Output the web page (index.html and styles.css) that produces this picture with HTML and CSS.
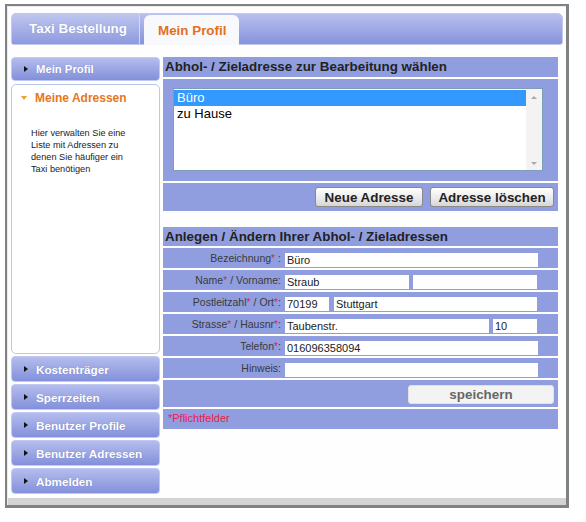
FILE: index.html
```html
<!DOCTYPE html>
<html lang="de">
<head>
<meta charset="utf-8">
<title>Mein Profil</title>
<link rel="stylesheet" href="styles.css">
</head>
<body>
<div class="frame">
  <div class="inner">
    <div class="tabbar">
      <div class="tab">Taxi Bestellung</div>
      <div class="tab active">Mein Profil</div>
    </div>
    <div class="main">
      <div class="sidebar">
        <div class="nav first"><span class="arrow"></span>Mein Profil</div>
        <div class="panel">
          <div class="panel-head"><span class="down"></span>Meine Adressen</div>
          <p class="desc">Hier verwalten Sie eine<br>Liste mit Adressen zu<br>denen Sie häufiger ein<br>Taxi benötigen</p>
        </div>
        <div class="nav"><span class="arrow"></span>Kostenträger</div>
        <div class="nav"><span class="arrow"></span>Sperrzeiten</div>
        <div class="nav"><span class="arrow"></span>Benutzer Profile</div>
        <div class="nav"><span class="arrow"></span>Benutzer Adressen</div>
        <div class="nav"><span class="arrow"></span>Abmelden</div>
      </div>
      <div class="content">
        <div class="sec-head">Abhol- / Zieladresse zur Bearbeitung wählen</div>
        <div class="list-area">
          <div class="listbox">
            <div class="items">
              <div class="item sel">Büro</div>
              <div class="item">zu Hause</div>
            </div>
            <div class="scroll"><span class="up"></span><span class="dn"></span></div>
          </div>
        </div>
        <div class="btn-row">
          <button class="btn">Neue Adresse</button>
          <button class="btn">Adresse löschen</button>
        </div>
        <div class="sec-head second">Anlegen / Ändern Ihrer Abhol- / Zieladressen</div>
        <div class="frow"><div class="lbl">Bezeichnung<span class="req">*</span> :</div><div class="fields"><input class="in w253" value="Büro"></div></div>
        <div class="frow"><div class="lbl">Name<span class="req">*</span> / Vorname:</div><div class="fields"><input class="in w124" value="Straub"><input class="in w124" value=""></div></div>
        <div class="frow"><div class="lbl">Postleitzahl<span class="req">*</span> / Ort<span class="req">*</span>:</div><div class="fields gap5"><input class="in w44" value="70199"><input class="in w203" value="Stuttgart"></div></div>
        <div class="frow"><div class="lbl">Strasse<span class="req">*</span> / Hausnr<span class="req">*</span>:</div><div class="fields"><input class="in w204" value="Taubenstr."><input class="in w44" value="10"></div></div>
        <div class="frow"><div class="lbl">Telefon<span class="req">*</span>:</div><div class="fields"><input class="in w253" value="016096358094"></div></div>
        <div class="frow"><div class="lbl">Hinweis:</div><div class="fields"><input class="in w253" value=""></div></div>
        <div class="save-row"><button class="save">speichern</button></div>
        <div class="req-row">*Pflichtfelder</div>
      </div>
    </div>
    <div class="footer"></div>
  </div>
</div>
</body>
</html>
```

FILE: styles.css
```css
* { box-sizing: border-box; }
html, body { margin: 0; padding: 0; background: #ffffff; }
body { font-family: Arial, "Liberation Sans", sans-serif; color: #222; }

.frame {
  margin: 4px 0 0 5px;
  width: 564px;
  height: 504px;
  border-style: solid;
  border-color: #7e8282;
  border-width: 2px 3px 3px 2px;
  background: #fdfdfd;
}
.inner {
  height: 100%;
  display: flex;
  flex-direction: column;
  border-left: 1px solid #ececec;
  border-top: 1px solid #ececec;
}

.tabbar {
  margin: 6px 3px 0 3px;
  height: 32px;
  display: flex;
  align-items: flex-end;
  gap: 4px;
  border: 1px solid #c3c9ee;
  border-radius: 5px 5px 3px 3px;
  background: linear-gradient(#b8c0ee, #8693dc);
}
.tab {
  height: 31px;
  font-size: 13.4px;
  font-weight: bold;
  display: flex;
  align-items: center;
}
.tab:first-child {
  width: 128px;
  padding-left: 17px;
  color: #fff;
  border-right: 1px solid #d3d8f4;
  border-radius: 4px 4px 0 0;
  background: linear-gradient(#c0c7ef, #8e9ae0);
  text-shadow: 0 0 1px #7b86c6;
}
.tab.active {
  width: 95px;
  height: 30px;
  padding-left: 14px;
  color: #e3701e;
  background: #f8f9fd;
  border-radius: 6px 6px 0 0;
  margin-bottom: -1px;
}

.main {
  flex: 1;
  display: flex;
  gap: 3px;
  padding: 12px 0 0 3px;
  background: #fefefe;
}

.sidebar { width: 149px; display: flex; flex-direction: column; }
.nav {
  height: 26px;
  margin-bottom: 2px;
  display: flex;
  align-items: center;
  padding-left: 12px;
  font-size: 11.7px;
  font-weight: bold;
  color: #fff;
  border: 1px solid #c2c9f0;
  border-radius: 4px;
  background: linear-gradient(#b4bdee, #8390da);
  text-shadow: 0 0 1px #6e79b8;
}
.nav.first { height: 24px; margin-bottom: 3px; font-size: 11.3px; }
.arrow {
  width: 0; height: 0;
  border-top: 3px solid transparent;
  border-bottom: 3px solid transparent;
  border-left: 4px solid #111;
  margin-right: 8px;
}
.panel {
  height: 270px;
  margin-bottom: 2px;
  border: 1px solid #b9c9e6;
  border-radius: 5px;
  background: #fff;
}
.panel-head {
  height: 26px;
  display: flex;
  align-items: center;
  padding-left: 9px;
  font-size: 12px;
  font-weight: bold;
  color: #e6761f;
}
.down {
  width: 0; height: 0;
  border-left: 3px solid transparent;
  border-right: 3px solid transparent;
  border-top: 4px solid #f0a22a;
  margin-right: 8px;
}
.desc {
  margin: 16px 0 0 19px;
  font-size: 9.2px;
  line-height: 12px;
  color: #222;
}

.content { width: 395px; display: flex; flex-direction: column; }
.sec-head {
  height: 20px;
  line-height: 20px;
  padding-left: 2px;
  font-size: 13.4px;
  font-weight: bold;
  color: #222;
  background: #909ee0;
}
.sec-head.second { height: 19px; line-height: 19px; margin-top: 16px; }
.list-area {
  height: 104px;
  border-top: 2px solid #fff;
  background: #909ee0;
  padding: 9px 0 0 10px;
}
.listbox {
  width: 370px;
  height: 83px;
  border: 1px solid #7f9db9;
  background: #fff;
  display: flex;
}
.items { flex: 1; padding-top: 1px; }
.item {
  height: 16px;
  line-height: 16px;
  padding-left: 3px;
  font-size: 13px;
  color: #000;
}
.item.sel { background: #3399ff; color: #fff; }
.scroll {
  width: 16px;
  background: #f3f3f3;
  display: flex;
  flex-direction: column;
  justify-content: space-between;
  align-items: center;
  padding: 7px 0 5px;
}
.up, .dn {
  width: 0; height: 0;
  border-left: 3px solid transparent;
  border-right: 3px solid transparent;
}
.up { border-bottom: 3px solid #a9a9a9; }
.dn { border-top: 3px solid #a9a9a9; }

.btn-row {
  height: 30px;
  border-top: 2px solid #fff;
  background: #909ee0;
  display: flex;
  justify-content: flex-end;
  align-items: flex-start;
  gap: 7px;
  padding: 4px 4px 0 0;
}
.btn {
  height: 20px;
  padding: 0;
  font-family: Arial, "Liberation Sans", sans-serif;
  font-size: 13.4px;
  font-weight: bold;
  color: #222;
  border: 1px solid #8a8a8a;
  border-radius: 3px;
  background: linear-gradient(#ffffff, #e9e9e9 60%, #d6d6d6);
}
.btn:first-child { width: 108px; }
.btn:last-child { width: 124px; }

.frow {
  height: 22px;
  border-top: 2px solid #fff;
  background: #909ee0;
  display: flex;
}
.lbl {
  width: 122px;
  padding-right: 4px;
  padding-top: 4px;
  text-align: right;
  font-size: 10.5px;
  color: #3a3a3a;
}
.req { color: #e8204a; }
.fields {
  display: flex;
  gap: 4px;
  padding-top: 5px;
}
.fields.gap5 { gap: 5px; }
.in {
  height: 14px;
  border: 0;
  padding: 0 2px;
  margin: 0;
  font-family: Arial, "Liberation Sans", sans-serif;
  font-size: 11px;
  color: #222;
  background: #fff;
  outline: none;
}
.w253 { width: 253px; }
.w124 { width: 124px; }
.w44 { width: 44px; }
.w203 { width: 203px; }
.w204 { width: 204px; }

.save-row {
  height: 29px;
  border-top: 2px solid #fff;
  background: #909ee0;
  display: flex;
  justify-content: flex-end;
  padding: 5px 4px 0 0;
}
.save {
  width: 146px;
  height: 19px;
  padding: 0;
  font-family: Arial, "Liberation Sans", sans-serif;
  font-size: 13.4px;
  font-weight: bold;
  color: #666;
  border: 1px solid #e2e2e2;
  border-radius: 3px;
  background: #f3f3f3;
}
.req-row {
  height: 22px;
  border-top: 2px solid #fff;
  background: #909ee0;
  padding: 3px 0 0 5px;
  font-size: 11px;
  color: #e8204a;
}

.footer { height: 7px; background: #d3d3d3; }
```
